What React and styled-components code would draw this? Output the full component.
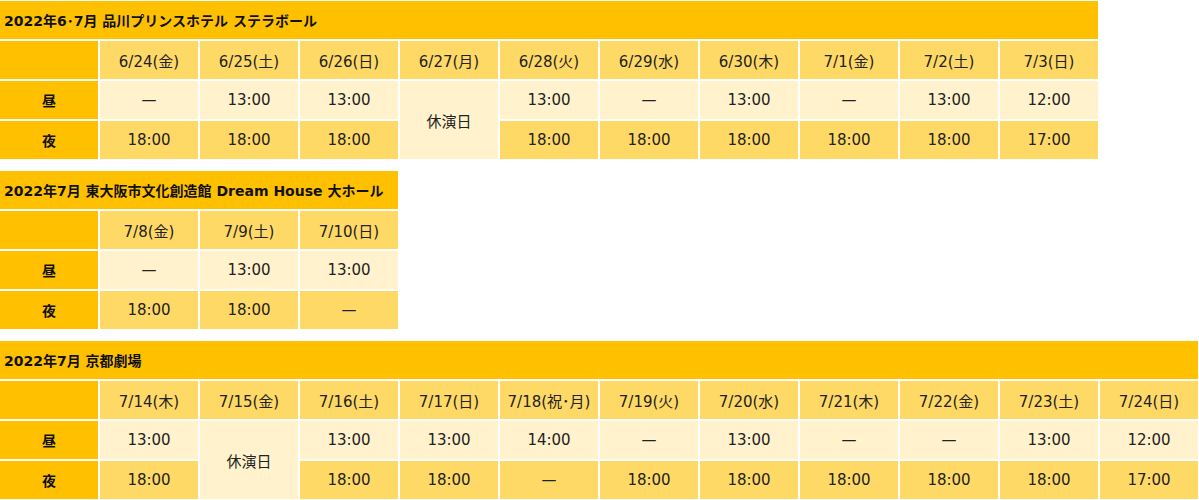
import styled, { createGlobalStyle } from "styled-components"

const GlobalStyle = createGlobalStyle`
    body {
        margin: 0;
        background: #fff;
        font-family: "DejaVu Sans", "Noto Sans CJK JP", sans-serif;
        color: #222;
    }
`

const Page = styled.div`
    display: flex;
    flex-direction: column;
    align-items: flex-start;
    gap: 12px;
    padding-top: 1px;
`

const Grid = styled.div`
    display: grid;
    grid-template-columns: repeat(${p => p.$cols}, 98px);
    grid-auto-rows: 38px;
    gap: 2px;
`

const Title = styled.div`
    grid-column: 1 / -1;
    display: flex;
    align-items: center;
    padding-left: 4px;
    background: #ffc000;
    font-size: 14px;
    font-weight: bold;
    color: #111;
    white-space: nowrap;
`

const Cell = styled.div`
    display: flex;
    align-items: center;
    justify-content: center;
    font-size: 15px;
    white-space: nowrap;
    background: ${p => p.$bg};
    ${p => p.$span && "grid-row: span 2;"}
`

const Label = styled(Cell)`
    background: #ffc000;
    font-size: 14px;
    font-weight: bold;
    color: #111;
`

const DATE = "#ffd966"
const DAY = "#fff2cc"
const NIGHT = "#ffd966"
const OFF = "休演日"

const shows = [
    {
        title: "2022年6･7月 品川プリンスホテル ステラボール",
        dates: ["6/24(金)", "6/25(土)", "6/26(日)", "6/27(月)", "6/28(火)", "6/29(水)", "6/30(木)", "7/1(金)", "7/2(土)", "7/3(日)"],
        day: ["—", "13:00", "13:00", OFF, "13:00", "—", "13:00", "—", "13:00", "12:00"],
        night: ["18:00", "18:00", "18:00", OFF, "18:00", "18:00", "18:00", "18:00", "18:00", "17:00"],
    },
    {
        title: "2022年7月 東大阪市文化創造館 Dream House 大ホール",
        dates: ["7/8(金)", "7/9(土)", "7/10(日)"],
        day: ["—", "13:00", "13:00"],
        night: ["18:00", "18:00", "—"],
    },
    {
        title: "2022年7月 京都劇場",
        dates: ["7/14(木)", "7/15(金)", "7/16(土)", "7/17(日)", "7/18(祝･月)", "7/19(火)", "7/20(水)", "7/21(木)", "7/22(金)", "7/23(土)", "7/24(日)"],
        day: ["13:00", OFF, "13:00", "13:00", "14:00", "—", "13:00", "—", "—", "13:00", "12:00"],
        night: ["18:00", OFF, "18:00", "18:00", "—", "18:00", "18:00", "18:00", "18:00", "18:00", "17:00"],
    },
]

const Schedule = ({ show }) => (
    <Grid $cols={show.dates.length + 1}>
        <Title>{show.title}</Title>
        <Label />
        {show.dates.map(d => <Cell key={d} $bg={DATE}>{d}</Cell>)}
        <Label>昼</Label>
        {show.day.map((t, i) =>
            t === OFF
                ? <Cell key={i} $bg={DAY} $span>{OFF}</Cell>
                : <Cell key={i} $bg={DAY}>{t}</Cell>
        )}
        <Label>夜</Label>
        {show.night.map((t, i) =>
            t === OFF ? null : <Cell key={i} $bg={NIGHT}>{t}</Cell>
        )}
    </Grid>
)

const App = () => (
    <>
        <GlobalStyle />
        <Page>
            {shows.map(s => <Schedule key={s.title} show={s} />)}
        </Page>
    </>
)

export default App
